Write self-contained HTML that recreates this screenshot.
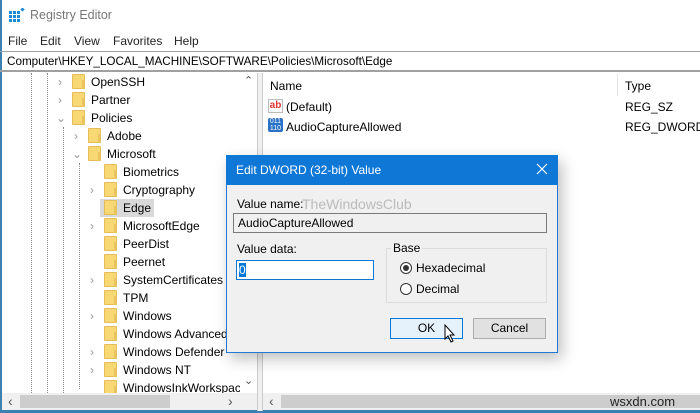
<!DOCTYPE html>
<html><head><meta charset="utf-8"><style>
*{margin:0;padding:0;box-sizing:border-box}
body{width:700px;height:413px;overflow:hidden;background:#fff;font-family:"Liberation Sans",sans-serif;font-size:12px;color:#000;position:relative}
.a{position:absolute}
.row{position:absolute;height:18px;line-height:18px;white-space:nowrap}
.fold{position:absolute;width:13px;height:15px;background:#f8d775;border:1px solid #e6bd57;border-radius:1px;top:1px}
.fold:after{content:"";position:absolute;right:-1px;bottom:-1px;width:3px;height:9px;background:#e9c35d}
.chev{position:absolute;color:#999;font-size:12px;top:0}
.dv{position:absolute;border-left:1px dotted #888;width:0}
.btn{position:absolute;height:21px;border:1px solid #adadad;background:#e1e1e1;text-align:center;line-height:19px}
</style></head><body>
<div class="a" style="left:0;top:0;width:2px;height:413px;background:#3c7fb1"></div>
<div class="a" style="left:0;top:410px;width:700px;height:3px;background:#3c7fb1"></div>
<svg class="a" style="left:9px;top:8px" width="16" height="14"><g fill="#1e8ad6"><rect x="0" y="3" width="3" height="3"/><rect x="4" y="3" width="3" height="3"/><rect x="8" y="3" width="3" height="3"/><rect x="0" y="7" width="3" height="3"/><rect x="4" y="7" width="3" height="3"/><rect x="8" y="7" width="3" height="3"/><rect x="0" y="11" width="3" height="3"/><rect x="4" y="11" width="3" height="3"/><rect x="8" y="11" width="3" height="3"/><rect x="12" y="0" width="3" height="3" transform="rotate(45 13.5 1.5)"/></g></svg>
<div class="a" style="left:30px;top:8px;font-size:12.5px;color:#777">Registry Editor</div>
<div class="a" style="left:8px;top:34px;color:#222">File</div>
<div class="a" style="left:40px;top:34px;color:#222">Edit</div>
<div class="a" style="left:74px;top:34px;color:#222">View</div>
<div class="a" style="left:113px;top:34px;color:#222">Favorites</div>
<div class="a" style="left:174px;top:34px;color:#222">Help</div>
<div class="a" style="left:0;top:51px;width:700px;height:21px;border-top:1px solid #a0a0a0;border-bottom:2px solid #a0a0a0"></div>
<div class="a" style="left:7px;top:55px;font-size:11.7px">Computer\HKEY_LOCAL_MACHINE\SOFTWARE\Policies\Microsoft\Edge</div>
<div class="a" style="left:240px;top:73px;width:18px;height:320px;background:#fff"></div>
<div class="a" style="left:244px;top:74px;color:#555;font-size:11px">&#8963;</div>
<div class="a" style="left:244px;top:374px;color:#555;font-size:11px">&#8964;</div>
<div class="a" style="left:257px;top:73px;width:1px;height:338px;background:#ccc"></div>
<div class="a" style="left:258px;top:73px;width:5px;height:338px;background:#f0f0f0"></div>
<div class="a" style="left:262px;top:73px;width:1px;height:338px;background:#ccc"></div>
<div class="dv" style="left:31px;top:73px;height:320px"></div>
<div class="dv" style="left:47px;top:73px;height:320px"></div>
<div class="dv" style="left:63px;top:127px;height:266px"></div>
<div class="dv" style="left:79px;top:163px;height:226px"></div>
<div class="chev" style="left:58px;top:75px">&#8250;</div>
<div class="chev" style="left:58px;top:93px">&#8250;</div>
<div class="chev" style="left:56px;top:111px">&#8964;</div>
<div class="chev" style="left:74px;top:129px">&#8250;</div>
<div class="chev" style="left:72px;top:147px">&#8964;</div>
<div class="row" style="left:72px;top:73px"><div class="fold" style="left:0"></div><span style="margin-left:19px">OpenSSH</span></div>
<div class="row" style="left:72px;top:91px"><div class="fold" style="left:0"></div><span style="margin-left:19px">Partner</span></div>
<div class="row" style="left:72px;top:109px"><div class="fold" style="left:0"></div><span style="margin-left:19px">Policies</span></div>
<div class="row" style="left:88px;top:127px"><div class="fold" style="left:0"></div><span style="margin-left:19px">Adobe</span></div>
<div class="row" style="left:88px;top:145px"><div class="fold" style="left:0"></div><span style="margin-left:19px">Microsoft</span></div>
<div class="a" style="left:100px;top:199px;width:54px;height:18px;background:#d9d9d9"></div>
<div class="row" style="left:104px;top:163px"><div class="fold"></div><span style="margin-left:19px">Biometrics</span></div>
<div class="row" style="left:104px;top:181px"><div class="fold"></div><span style="margin-left:19px">Cryptography</span></div>
<div class="row" style="left:104px;top:199px"><div class="fold"></div><span style="margin-left:19px">Edge</span></div>
<div class="row" style="left:104px;top:217px"><div class="fold"></div><span style="margin-left:19px">MicrosoftEdge</span></div>
<div class="row" style="left:104px;top:235px"><div class="fold"></div><span style="margin-left:19px">PeerDist</span></div>
<div class="row" style="left:104px;top:253px"><div class="fold"></div><span style="margin-left:19px">Peernet</span></div>
<div class="row" style="left:104px;top:271px"><div class="fold"></div><span style="margin-left:19px">SystemCertificates</span></div>
<div class="row" style="left:104px;top:289px"><div class="fold"></div><span style="margin-left:19px">TPM</span></div>
<div class="row" style="left:104px;top:307px"><div class="fold"></div><span style="margin-left:19px">Windows</span></div>
<div class="row" style="left:104px;top:325px;width:122px;overflow:hidden"><div class="fold"></div><span style="margin-left:19px">Windows Advanced</span></div>
<div class="row" style="left:104px;top:343px"><div class="fold"></div><span style="margin-left:19px">Windows Defender</span></div>
<div class="row" style="left:104px;top:361px"><div class="fold"></div><span style="margin-left:19px">Windows NT</span></div>
<div class="row" style="left:104px;top:379px;width:136px;overflow:hidden;height:14px"><div class="fold"></div><span style="margin-left:19px">WindowsInkWorkspace</span></div>
<div class="chev" style="left:90px;top:183px">&#8250;</div>
<div class="chev" style="left:90px;top:219px">&#8250;</div>
<div class="chev" style="left:90px;top:273px">&#8250;</div>
<div class="chev" style="left:90px;top:309px">&#8250;</div>
<div class="chev" style="left:90px;top:345px">&#8250;</div>
<div class="chev" style="left:90px;top:363px">&#8250;</div>
<div class="a" style="left:2px;top:393px;width:255px;height:17px;background:#f0f0f0"></div>
<div class="a" style="left:20px;top:395px;width:150px;height:13px;background:#cdcdcd"></div>
<div class="a" style="left:8px;top:393px;color:#555;font-size:14px">&#8249;</div>
<div class="a" style="left:228px;top:393px;color:#555;font-size:14px">&#8250;</div>
<div class="a" style="left:263px;top:393px;width:437px;height:17px;background:#f0f0f0"></div>
<div class="a" style="left:281px;top:395px;width:419px;height:13px;background:#cdcdcd"></div>
<div class="a" style="left:269px;top:393px;color:#555;font-size:14px">&#8249;</div>
<div class="a" style="left:610px;top:394px;color:#222;font-size:13px">wsxdn.com</div>
<div class="a" style="left:270px;top:79px">Name</div>
<div class="a" style="left:617px;top:74px;width:1px;height:22px;background:#e5e5e5"></div>
<div class="a" style="left:625px;top:79px">Type</div>
<div class="a" style="left:268px;top:99px;width:15px;height:14px;border:1px solid #bbb;background:#fff;color:#d33;font-size:10px;font-weight:bold;line-height:11px;text-align:center">ab</div>
<div class="a" style="left:286px;top:100px">(Default)</div>
<div class="a" style="left:625px;top:100px">REG_SZ</div>
<div class="a" style="left:268px;top:118px;width:15px;height:14px;background:#2a72c8;color:#fff;font-size:7px;line-height:7px;text-align:center;border-radius:2px">011<br>110</div>
<div class="a" style="left:286px;top:120px">AudioCaptureAllowed</div>
<div class="a" style="left:625px;top:120px">REG_DWORD</div>
<div class="a" style="left:226px;top:155px;width:332px;height:198px;background:#f0f0f0;border:1px solid #1e7ad6;box-shadow:4px 6px 14px rgba(0,0,0,.25)"></div>
<div class="a" style="left:226px;top:155px;width:332px;height:30px;background:#0f78d7"></div>
<div class="a" style="left:236px;top:163px;color:#fff;font-size:12px">Edit DWORD (32-bit) Value</div>
<svg class="a" style="left:536px;top:163px" width="12" height="12"><path d="M1 1L11 11M11 1L1 11" stroke="#fff" stroke-width="1.2"/></svg>
<div class="a" style="left:237px;top:197px">Value name:</div>
<div class="a" style="left:302px;top:196px;font-size:14px;color:#bbb">TheWindowsClub</div>
<div class="a" style="left:233px;top:213px;width:314px;height:20px;background:#f0f0f0;border:1px solid #7a7a7a"></div>
<div class="a" style="left:238px;top:216px">AudioCaptureAllowed</div>
<div class="a" style="left:237px;top:242px">Value data:</div>
<div class="a" style="left:236px;top:260px;width:138px;height:20px;background:#fff;border:1px solid #0f78d7"></div>
<div class="a" style="left:239px;top:263px;width:7px;height:14px;background:#0078d7;color:#fff;line-height:14px">0</div>
<div class="a" style="left:386px;top:248px;width:161px;height:55px;border:1px solid #dcdcdc"></div>
<div class="a" style="left:391px;top:241px;background:#f0f0f0;padding:0 2px">Base</div>
<div class="a" style="left:400px;top:262px;width:12px;height:12px;border:1px solid #333;border-radius:50%;background:#fff"></div>
<div class="a" style="left:403px;top:265px;width:6px;height:6px;border-radius:50%;background:#333"></div>
<div class="a" style="left:416px;top:261px">Hexadecimal</div>
<div class="a" style="left:400px;top:283px;width:12px;height:12px;border:1px solid #333;border-radius:50%;background:#fff"></div>
<div class="a" style="left:416px;top:282px">Decimal</div>
<div class="btn" style="left:390px;top:318px;width:73px;background:#e5f1fb;border-color:#0078d7">OK</div>
<div class="btn" style="left:473px;top:318px;width:73px">Cancel</div>
<svg class="a" style="left:444px;top:324px" width="12" height="20"><path d="M1 1 L1 15 L4 12 L7 18 L9 17 L6 11 L10 11 Z" fill="#fff" stroke="#000" stroke-width="1"/></svg>
</body></html>
